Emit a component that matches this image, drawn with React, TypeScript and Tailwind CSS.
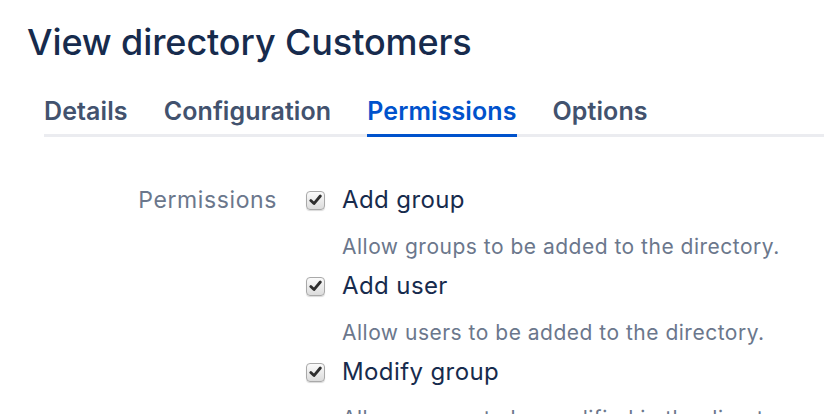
import React from "react";

const font = { fontFamily: "Inter, 'Noto Sans', 'Liberation Sans', sans-serif" };

function Check() {
  return (
    <div className="flex h-[19px] w-[19px] shrink-0 items-center justify-center rounded-[4px] border border-[#a9a9a9] bg-gradient-to-b from-[#fbfbfb] to-[#dcdcdc] shadow-[0_1px_1px_rgba(0,0,0,0.15)]">
      <svg width="13" height="12" viewBox="0 0 13 12">
        <path d="M1.8 6.6 L5 9.6 L11.3 2" fill="none" stroke="#2e2e2e" strokeWidth="2.8" strokeLinecap="round" strokeLinejoin="round" />
      </svg>
    </div>
  );
}

const perms = [
  { title: "Add group", desc: "Allow groups to be added to the directory." },
  { title: "Add user", desc: "Allow users to be added to the directory." },
  { title: "Modify group", desc: "Allow groups to be modified in the directory." },
];

export default function App() {
  return (
    <div className="h-[414px] w-[824px] overflow-hidden bg-white" style={font}>
      <h1 className="pl-[27px] pt-[20px] text-[36px] font-medium leading-[44px] tracking-[-0.1px] text-[#172b4d]">
        View directory Customers
      </h1>
      <div className="ml-[44px] mt-[32px] flex border-b-[3px] border-[#ebecf0] text-[25px] font-semibold leading-[30px] tracking-[0.1px]">
        <div className="mr-[36px] pb-[8px] text-[#42526e]">Details</div>
        <div className="mr-[36px] pb-[8px] text-[#42526e]">Configuration</div>
        <div className="relative mr-[36px] pb-[8px] text-[#0052cc]">
          Permissions
          <div className="absolute bottom-[-3px] left-0 right-0 h-[3px] bg-[#0052cc]" />
        </div>
        <div className="pb-[8px] text-[#42526e]">Options</div>
      </div>
      <div className="mt-[48px] flex">
        <div className="w-[277px] text-right text-[23px] leading-[30px] tracking-[0.6px] text-[#6b778c]">Permissions</div>
        <div className="ml-[29px] flex flex-col">
          {perms.map((p) => (
            <div key={p.title} className="mb-[9px]">
              <div className="flex items-center gap-[17px]">
                <Check />
                <div className="text-[24px] leading-[30px] tracking-[0.4px] text-[#172b4d]">{p.title}</div>
              </div>
              <div className="ml-[36px] mt-[17px] whitespace-nowrap text-[21px] leading-[30px] tracking-[0.5px] text-[#6b778c]">{p.desc}</div>
            </div>
          ))}
        </div>
      </div>
    </div>
  );
}
